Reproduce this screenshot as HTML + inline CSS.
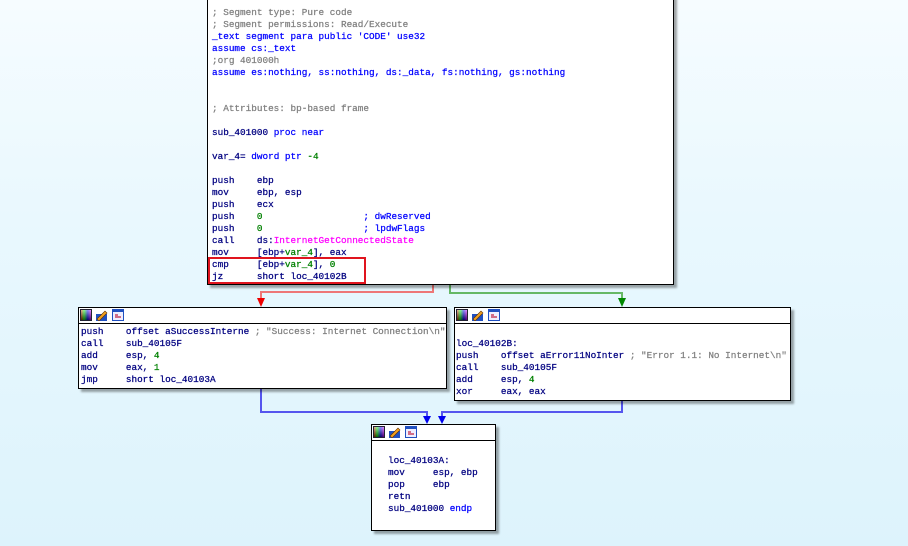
<!DOCTYPE html>
<html><head><meta charset="utf-8"><style>
*{margin:0;padding:0}
body{width:908px;height:546px;overflow:hidden;position:relative;background:linear-gradient(#f6fcff 0%,#e9f8fe 40%,#ddf3fc 100%);font-family:"Liberation Mono",monospace;font-size:9.35px}
.b{position:absolute;background:#fff;border:1px solid #000;box-shadow:3px 3px 2px rgba(0,0,0,.35)}
.h{height:15px;border-bottom:1px solid #000;position:relative}
pre{font-family:"Liberation Mono",monospace;font-size:9.35px;line-height:12px;color:#000080;position:absolute;white-space:pre;-webkit-text-stroke:0.25px currentColor}
.g{color:#808080}.bl{color:#0000ff}.gr{color:#008000}.m{color:#ff00ff}
</style></head><body>
<svg width="908" height="546" style="position:absolute;left:0;top:0">
<g fill="none" stroke-width="2">
<path d="M433 284V292H261V300" stroke="#ee7777"/>
<path d="M450 284V293H622V300" stroke="#66b866"/>
<path d="M261 389V412H427V418" stroke="#5555ee"/>
<path d="M622 401V412H442V418" stroke="#5555ee"/>
</g>
<path d="M257 298h8l-4 9z" fill="#e00"/>
<path d="M618 298h8l-4 9z" fill="#080"/>
<path d="M423 416h8l-4 8z" fill="#00e"/>
<path d="M438 416h8l-4 8z" fill="#00e"/>
</svg>

<div class="b" style="left:207px;top:-20px;width:465px;height:303px">
<pre style="left:4px;top:26px"><span class="g">; Segment type: Pure code
; Segment permissions: Read/Execute</span>
<span class="bl">_text segment para public 'CODE' use32
assume cs:_text</span>
<span class="g">;org 401000h</span>
<span class="bl">assume es:nothing, ss:nothing, ds:_data, fs:nothing, gs:nothing</span>


<span class="g">; Attributes: bp-based frame</span>

sub_401000 <span class="bl">proc near</span>

var_4= <span class="bl">dword ptr</span> <span class="gr">-4</span>

push    ebp
mov     ebp, esp
push    ecx
push    <span class="gr">0</span>                  <span class="bl">; dwReserved</span>
push    <span class="gr">0</span>                  <span class="bl">; lpdwFlags</span>
call    ds:<span class="m">InternetGetConnectedState</span>
mov     [ebp+<span class="gr">var_4</span>], eax
cmp     [ebp+<span class="gr">var_4</span>], <span class="gr">0</span>
jz      short loc_40102B</pre>
</div>
<div style="position:absolute;left:208px;top:257px;width:154px;height:23px;border:2px solid #e0141e"></div>

<div class="b" style="left:78px;top:307px;width:367px;height:80px">
<div class="h"></div>
<pre style="left:2px;top:18px">push    offset aSuccessInterne <span class="g">; "Success: Internet Connection\n"</span>
call    sub_40105F
add     esp, <span class="gr">4</span>
mov     eax, <span class="gr">1</span>
jmp     short loc_40103A</pre>
</div>

<div class="b" style="left:454px;top:307px;width:335px;height:92px">
<div class="h"></div>
<pre style="left:1px;top:30px">loc_40102B:
push    offset aError11NoInter <span class="g">; "Error 1.1: No Internet\n"</span>
call    sub_40105F
add     esp, <span class="gr">4</span>
xor     eax, eax</pre>
</div>

<div class="b" style="left:371px;top:424px;width:123px;height:105px">
<div class="h"></div>
<pre style="left:16px;top:30px">loc_40103A:
mov     esp, ebp
pop     ebp
retn
sub_401000 <span class="bl">endp</span></pre>
</div>

<svg width="0" height="0" style="position:absolute">
<defs>
<linearGradient id="cg" x1="0" y1="0" x2="1" y2="0"><stop offset="0" stop-color="#f00"/><stop offset=".33" stop-color="#0f0"/><stop offset=".66" stop-color="#00f"/><stop offset="1" stop-color="#f0f"/></linearGradient>
<linearGradient id="cw" x1="0" y1="0" x2="0" y2="1"><stop offset="0" stop-color="#fff" stop-opacity=".9"/><stop offset="1" stop-color="#000" stop-opacity=".9"/></linearGradient>
</defs></svg>
<div id="icons"></div>
<script>
var pos=[[80,309],[456,309],[373,426]];
var h='';
pos.forEach(function(p){
h+='<svg style="position:absolute;left:'+p[0]+'px;top:'+p[1]+'px" width="50" height="12">'+
'<rect x="0.5" y="0.5" width="11" height="11" fill="url(#cg)" stroke="#223"/><rect x="1" y="1" width="10" height="10" fill="url(#cw)" opacity=".6"/>'+
'<rect x="16" y="5" width="11" height="7" fill="#2050c0"/><path d="M17 10L25 2l2 2-8 8z" fill="#f0a020" stroke="#603000" stroke-width=".6"/>'+
'<rect x="32.5" y="0.5" width="11" height="11" fill="#eef" stroke="#2050c0"/><rect x="33" y="1" width="10" height="2" fill="#2050c0"/><path d="M35 6h3M35 8h6" stroke="#c02040" stroke-width="1.2"/></svg>';
});
document.getElementById('icons').innerHTML=h;
</script>
</body></html>
